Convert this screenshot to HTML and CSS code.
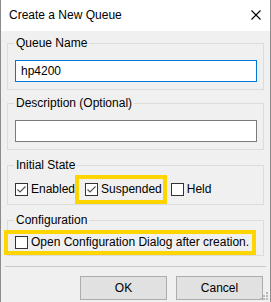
FILE: index.html
```html
<!DOCTYPE html>
<html>
<head>
<meta charset="utf-8">
<link rel="stylesheet" href="styles.css">
</head>
<body>
<div class="window">
  <div class="titlebar">
    <span class="title">Create a New Queue</span>
    <svg class="close" width="10" height="10" viewBox="0 0 10 10"><path d="M0.5 0.5 L9.5 9.5 M9.5 0.5 L0.5 9.5" stroke="#000" stroke-width="1.1" fill="none"/></svg>
  </div>
  <div class="client">
    <fieldset class="group group-input">
      <legend>Queue Name</legend>
      <div class="textbox focused">hp4200</div>
    </fieldset>
    <fieldset class="group group-input second">
      <legend>Description (Optional)</legend>
      <div class="textbox"></div>
    </fieldset>
    <fieldset class="group group-check third">
      <legend>Initial State</legend>
      <div class="checkrow">
        <label class="check first">
          <span class="box"><svg width="11" height="11" viewBox="0 0 11 11"><path d="M1.5 5.5 L4 8 L9.5 2.5" stroke="#555" stroke-width="1.2" fill="none"/></svg></span>
          <span>Enabled</span>
        </label>
        <label class="check hl-small">
          <span class="box"><svg width="11" height="11" viewBox="0 0 11 11"><path d="M1.5 5.5 L4 8 L9.5 2.5" stroke="#555" stroke-width="1.2" fill="none"/></svg></span>
          <span>Suspended</span>
        </label>
        <label class="check">
          <span class="box"></span>
          <span>Held</span>
        </label>
      </div>
    </fieldset>
    <fieldset class="group group-check fourth">
      <legend>Configuration</legend>
      <div class="checkrow">
        <label class="check hl-wide">
          <span class="box"></span>
          <span>Open Configuration Dialog after creation.</span>
        </label>
      </div>
    </fieldset>
    <div class="separator"></div>
    <div class="buttons">
      <button class="btn">OK</button>
      <button class="btn">Cancel</button>
    </div>
  </div>
  <svg class="grip" width="8" height="8" viewBox="0 0 8 8">
    <rect x="6" y="0" width="2" height="2" fill="#b8b8b8"/>
    <rect x="3" y="3" width="2" height="2" fill="#b8b8b8"/>
    <rect x="6" y="3" width="2" height="2" fill="#b8b8b8"/>
    <rect x="0" y="6" width="2" height="2" fill="#b8b8b8"/>
    <rect x="3" y="6" width="2" height="2" fill="#b8b8b8"/>
    <rect x="6" y="6" width="2" height="2" fill="#b8b8b8"/>
  </svg>
</div>
</body>
</html>
```

FILE: styles.css
```css
* { box-sizing: border-box; }
html, body {
  margin: 0;
  padding: 0;
  background: #f0f0f0;
}
body {
  font-family: "Liberation Sans", Arial, sans-serif;
  font-size: 12px;
  color: #000;
  white-space: nowrap;
}
.window {
  position: relative;
  width: 271px;
  height: 302px;
  background: #f0f0f0;
  border-left: 1px solid #8c8c8c;
  border-right: 1px solid #8c8c8c;
  overflow: hidden;
}
.titlebar {
  height: 31px;
  background: #fff;
  display: flex;
  align-items: center;
  justify-content: space-between;
  padding: 0 9px 0 8px;
}
.title {
  line-height: 31px;
}
.close {
  display: block;
  margin-top: -1px;
}
.client {
  padding: 4px 6px 0 6px;
}
.group {
  margin: 0;
  border: 1px solid #dcdcdc;
  padding: 9px 6px 7px 7px;
  min-width: 0;
}
.group legend {
  padding: 0 2px;
  margin-left: -1px;
  line-height: 16px;
}
.second { margin-top: 5px; }
.third { margin-top: 7px; padding-top: 7px; padding-bottom: 5px; }
.fourth { margin-top: 7px; padding-top: 7px; padding-bottom: 5px; }
.textbox {
  height: 22px;
  border: 1px solid #7a7a7a;
  background: #fff;
  padding-left: 5px;
  line-height: 20px;
}
.textbox.focused {
  border-color: #0078d7;
}
.checkrow {
  display: flex;
  align-items: center;
  line-height: 15px;
}
.check {
  display: flex;
  align-items: center;
  gap: 3px;
}
.check.first {
  margin-right: 10px;
}
.box {
  width: 13px;
  height: 13px;
  border: 1px solid #333;
  background: #fff;
  display: flex;
  align-items: center;
  justify-content: center;
  flex: none;
}
.box svg { display: block; }
.hl-small {
  padding: 2px 0 2px 5px;
  margin-left: -5px;
  margin-right: 9px;
  outline: 4px solid #ffd500;
  outline-offset: 1px;
}
.hl-wide {
  padding: 0 2px 0 6px;
  margin-left: -6px;
  outline: 4px solid #ffd500;
  outline-offset: 1px;
}
.separator {
  margin: 10px -2px 0 -2px;
  height: 1px;
  background: #c8c8c8;
}
.buttons {
  display: flex;
  justify-content: flex-end;
  gap: 9px;
  padding: 9px 1px 0 0;
}
.btn {
  width: 87px;
  height: 24px;
  background: #e1e1e1;
  border: 1px solid #adadad;
  font: inherit;
  color: #000;
  padding: 0;
}
.grip {
  position: absolute;
  right: 2px;
  bottom: 2px;
}
```
